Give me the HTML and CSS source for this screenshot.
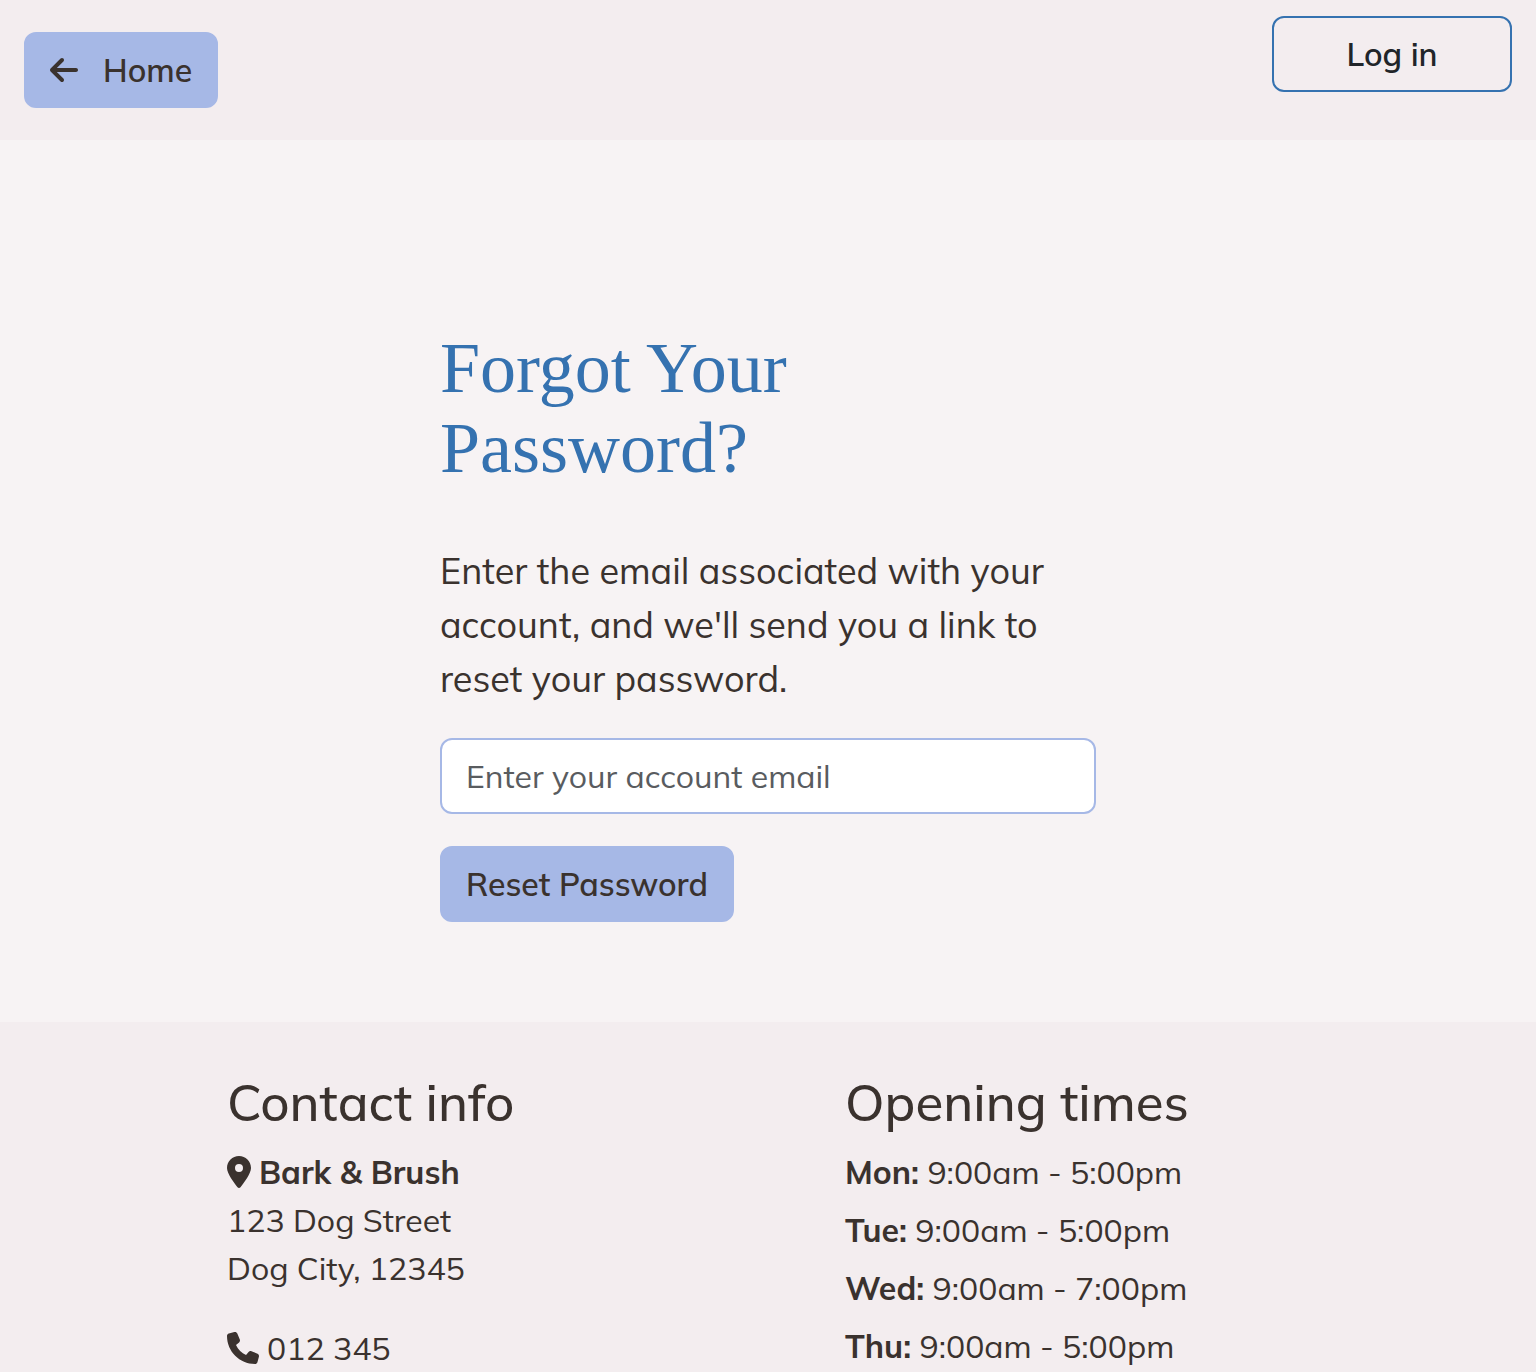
FILE: index.html
```html
<!DOCTYPE html>
<html lang="en">
<head>
  <meta charset="utf-8">
  <meta name="viewport" content="width=device-width, initial-scale=1">
  <title>Forgot Your Password? | Bark &amp; Brush</title>
  <link rel="stylesheet" href="styles.css">
</head>
<body>
  <header class="site-header">
    <a class="btn btn-primary btn-home" href="#">
      <svg class="icon-arrow" viewBox="0 0 448 512" aria-hidden="true"><path d="M9.4 233.400c-12.500 12.500-12.500 32.800 0 45.300l160 160c12.500 12.500 32.800 12.500 45.300 0s12.500-32.800 0-45.300L109.200 288 416 288c17.700 0 32-14.300 32-32s-14.300-32-32-32l-306.700 0L214.600 118.600c12.500-12.500 12.500-32.800 0-45.300s-32.800-12.500-45.300 0l-160 160z"/></svg>
      <span>Home</span>
    </a>
    <a class="btn btn-outline" href="#">Log in</a>
  </header>

  <main class="reset">
    <h1 class="reset-title">Forgot Your<br>Password?</h1>
    <p class="reset-text">Enter the email associated with your account, and we'll send you a link to reset your password.</p>
    <form class="reset-form">
      <input class="field" type="email" aria-label="Account email" placeholder="Enter your account email">
      <button class="btn btn-primary" type="submit">Reset Password</button>
    </form>
  </main>

  <footer class="site-footer">
    <div class="footer-grid">
      <section class="footer-col">
        <h2 class="footer-title">Contact info</h2>
        <address class="address">
          <p class="line"><svg class="icon-pin" viewBox="0 0 384 512" aria-hidden="true"><path d="M215.700 499.200C267 435 384 279.400 384 192C384 86 298 0 192 0S0 86 0 192c0 87.400 117 243 168.300 307.200c12.300 15.300 35.100 15.300 47.400 0zM192 128a64 64 0 1 1 0 128 64 64 0 1 1 0-128z"/></svg><strong>Bark &amp; Brush</strong></p>
          <p>123 Dog Street</p>
          <p>Dog City, 12345</p>
        </address>
        <p class="line"><svg class="icon-phone" viewBox="0 0 512 512" aria-hidden="true"><path d="M164.900 24.600c-7.700-18.600-28-28.500-47.400-23.200l-88 24C12.100 30.200 0 46 0 64C0 311.400 200.600 512 448 512c18 0 33.800-12.100 38.600-29.500l24-88c5.300-19.400-4.600-39.700-23.200-47.400l-96-40c-16.300-6.800-35.200-2.100-46.300 11.600L304.700 368C234.300 334.700 177.300 277.700 144 207.300L193.300 167c13.700-11.200 18.400-30 11.600-46.300l-40-96z"/></svg><span>012 345</span></p>
      </section>
      <section class="footer-col">
        <h2 class="footer-title">Opening times</h2>
        <ul class="times">
          <li><strong>Mon:</strong> 9:00am - 5:00pm</li>
          <li><strong>Tue:</strong> 9:00am - 5:00pm</li>
          <li><strong>Wed:</strong> 9:00am - 7:00pm</li>
          <li><strong>Thu:</strong> 9:00am - 5:00pm</li>
        </ul>
      </section>
    </div>
  </footer>
</body>
</html>
```
FILE: styles.css
```css
* {
  box-sizing: border-box;
}

body {
  margin: 0;
  background: #f7f3f4;
  color: #3a322e;
  font-family: Mulish, Lato, "Open Sans", sans-serif;
  font-size: 32px;
  line-height: 48px;
}

h1,
h2,
p,
ul {
  margin: 0;
  padding: 0;
}

svg {
  flex: none;
  fill: currentColor;
}

.site-header {
  display: flex;
  justify-content: space-between;
  align-items: flex-start;
  padding: 16px 24px;
  background: #f3edef;
}

.btn {
  display: inline-flex;
  align-items: center;
  justify-content: center;
  padding: 12px 24px;
  border: 2px solid transparent;
  border-radius: 12px;
  color: inherit;
  font: inherit;
  font-weight: 600;
  text-decoration: none;
  cursor: pointer;
}

.btn-primary {
  background: #a6b8e6;
  border-color: #a6b8e6;
}

.btn-home {
  gap: 25px;
  margin: 16px 0;
}

.btn-outline {
  width: 240px;
  border-color: #3572b0;
  color: #212529;
}

.icon-arrow {
  width: 28px;
  height: 32px;
}

.reset {
  max-width: 656px;
  margin: 0 auto;
  padding: 188px 0 100px;
}

.reset-title {
  margin-bottom: 56px;
  color: #3572b0;
  font-family: "Liberation Serif", serif;
  font-size: 72px;
  font-weight: 400;
  line-height: 80px;
}

.reset-text {
  margin-bottom: 32px;
  font-size: 36px;
  line-height: 54px;
}

.reset-form {
  display: flex;
  flex-direction: column;
  align-items: flex-start;
  gap: 32px;
}

.field {
  width: 100%;
  height: 76px;
  padding: 12px 24px;
  border: 2px solid #a6b8e6;
  border-radius: 12px;
  background: #fff;
  color: inherit;
  font: inherit;
}

.field::placeholder {
  color: #595c5f;
  opacity: 1;
}

.site-footer {
  padding-top: 50px;
  background: #f3edef;
}

.footer-grid {
  display: grid;
  grid-template-columns: 1fr 1fr;
  max-width: 1236px;
  margin: 0 auto;
}

.footer-col {
  padding-left: 77px;
}

.footer-title {
  margin-bottom: 16px;
  font-size: 51px;
  font-weight: 500;
  line-height: 60px;
}

.address {
  margin-bottom: 32px;
  font-style: normal;
}

.line {
  display: flex;
  align-items: center;
  gap: 8px;
}

.icon-pin {
  width: 24px;
  height: 32px;
}

.icon-phone {
  width: 32px;
  height: 32px;
}

.times {
  display: grid;
  gap: 10px;
  list-style: none;
}
```
